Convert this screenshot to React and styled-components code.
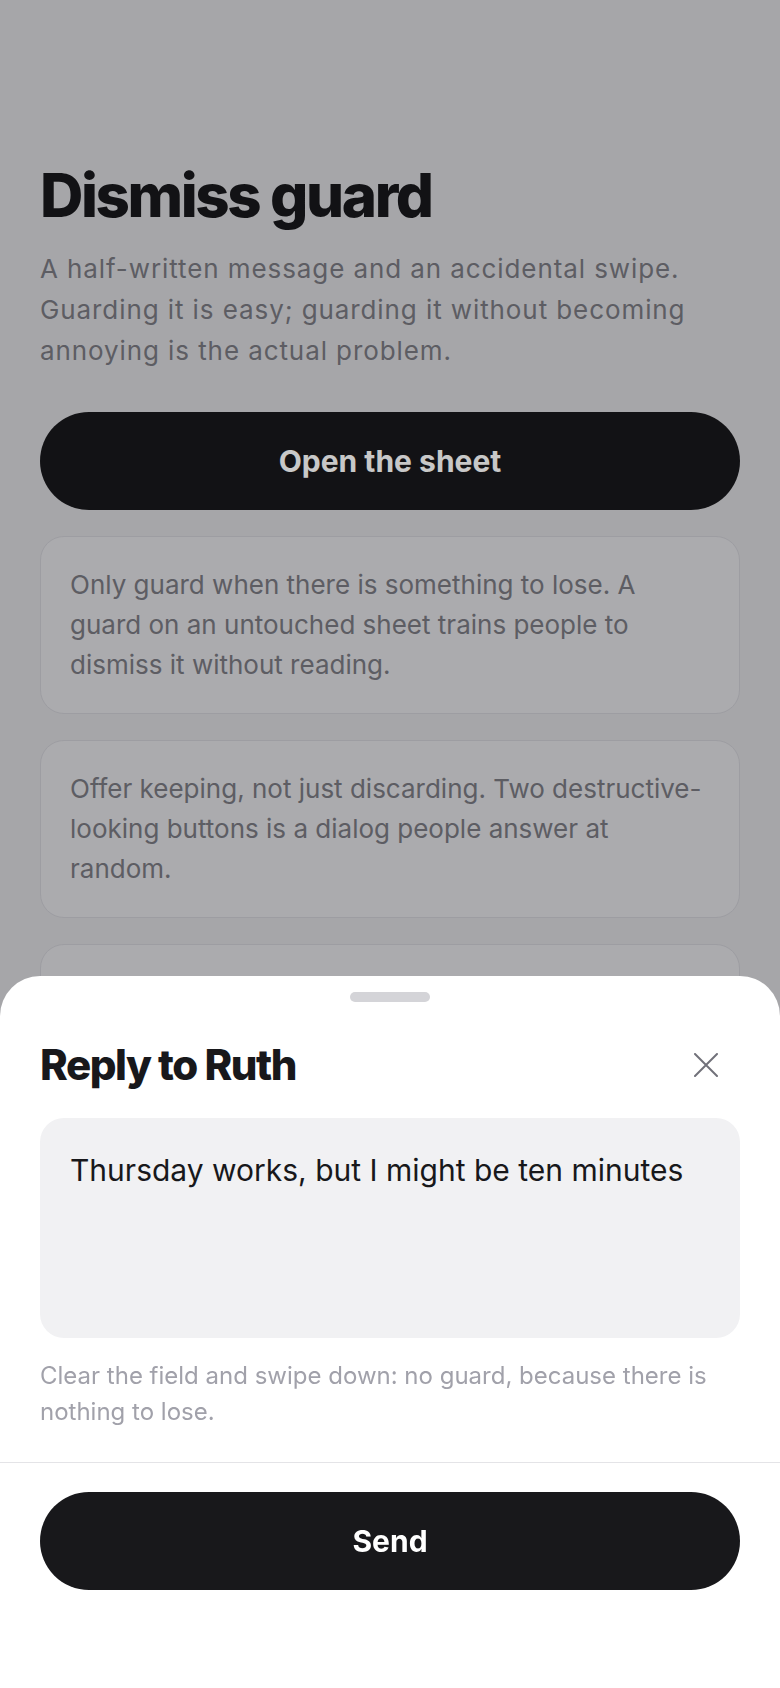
import React from "react";
import styled, { createGlobalStyle } from "styled-components";

const GlobalStyle = createGlobalStyle`
  * { box-sizing: border-box; }
  html, body { margin: 0; padding: 0; }
  body {
    background: #d4d4d8;
    font-family: Inter, "Noto Sans", "Liberation Sans", sans-serif;
    color: #18181b;
    -webkit-font-smoothing: antialiased;
  }
`;

const Page = styled.main`
  min-height: 1688px;
  padding: 162px 40px 0;
  background: #d4d4d8;
`;

const Title = styled.h1`
  margin: 0 0 20px;
  font-size: 60px;
  line-height: 1.1;
  font-weight: 800;
  letter-spacing: -0.04em;
  color: #18181b;
`;

const Lead = styled.p`
  margin: 0 0 41px;
  font-size: 26px;
  line-height: 41px;
  letter-spacing: 0.035em;
  color: #77777f;
`;

const PillButton = styled.button`
  display: block;
  width: 100%;
  height: 98px;
  border: 0;
  border-radius: 49px;
  background: #18181b;
  color: #ffffff;
  font-family: inherit;
  font-size: 30px;
  font-weight: 700;
  cursor: pointer;
`;

const Notes = styled.div`
  display: flex;
  flex-direction: column;
  gap: 26px;
  margin-top: 26px;
`;

const Note = styled.div`
  padding: 28px 29px;
  border: 1px solid #c9c9cf;
  border-radius: 24px;
  background: #dadade;
  font-size: 26px;
  line-height: 40px;
  color: #77777f;
`;

const Backdrop = styled.div`
  position: fixed;
  inset: 0;
  background: rgba(0, 0, 0, 0.216);
  z-index: 1;
`;

const Sheet = styled.section`
  position: fixed;
  left: 0;
  right: 0;
  bottom: 0;
  z-index: 2;
  background: #ffffff;
  border-radius: 40px 40px 0 0;
  display: flex;
  flex-direction: column;
`;

const Grabber = styled.div`
  align-self: center;
  width: 80px;
  height: 10px;
  margin-top: 16px;
  border-radius: 5px;
  background: #d4d4d8;
`;

const SheetBody = styled.div`
  padding: 39px 40px 32px;
`;

const SheetHeader = styled.header`
  display: flex;
  align-items: center;
  justify-content: space-between;
  margin-bottom: 29px;
`;

const SheetTitle = styled.h2`
  margin: 0;
  font-size: 42px;
  line-height: 48px;
  font-weight: 800;
  letter-spacing: -0.035em;
  color: #18181b;
`;

const CloseButton = styled.button`
  display: flex;
  align-items: center;
  justify-content: center;
  width: 44px;
  height: 44px;
  margin-right: 12px;
  padding: 0;
  border: 0;
  background: transparent;
  color: #71717a;
  cursor: pointer;
`;

const Field = styled.textarea`
  display: block;
  width: 100%;
  height: 220px;
  padding: 30px;
  border: 0;
  border-radius: 24px;
  background: #f1f1f3;
  color: #18181b;
  font-family: inherit;
  font-size: 30px;
  line-height: 1.5;
  resize: none;
  outline: none;
`;

const Hint = styled.p`
  margin: 20px 0 0;
  font-size: 24px;
  line-height: 36px;
  color: #a1a1aa;
`;

const SheetFooter = styled.footer`
  padding: 29px 40px 98px;
  border-top: 1px solid #e4e4e7;
`;

function CloseIcon() {
  return (
    <svg width="24" height="24" viewBox="0 0 24 24" fill="none" stroke="currentColor" strokeWidth="2" strokeLinecap="round">
      <path d="M1 1 23 23M23 1 1 23" />
    </svg>
  );
}

const notes = [
  "Only guard when there is something to lose. A guard on an untouched sheet trains people to dismiss it without reading.",
  "Offer keeping, not just discarding. Two destructive-looking buttons is a dialog people answer at random.",
  "Keep the draft when the sheet closes. Coming back to it should feel like nothing was lost.",
];

export default function App() {
  return (
    <>
      <GlobalStyle />
      <Page>
        <Title>Dismiss guard</Title>
        <Lead>
          A half-written message and an accidental swipe. Guarding it is easy; guarding it without becoming
          annoying is the actual problem.
        </Lead>
        <PillButton>Open the sheet</PillButton>
        <Notes>
          {notes.map((text) => (
            <Note key={text}>{text}</Note>
          ))}
        </Notes>
      </Page>
      <Backdrop />
      <Sheet>
        <Grabber />
        <SheetBody>
          <SheetHeader>
            <SheetTitle>Reply to Ruth</SheetTitle>
            <CloseButton aria-label="Close">
              <CloseIcon />
            </CloseButton>
          </SheetHeader>
          <Field defaultValue="Thursday works, but I might be ten minutes" />
          <Hint>Clear the field and swipe down: no guard, because there is nothing to lose.</Hint>
        </SheetBody>
        <SheetFooter>
          <PillButton>Send</PillButton>
        </SheetFooter>
      </Sheet>
    </>
  );
}
